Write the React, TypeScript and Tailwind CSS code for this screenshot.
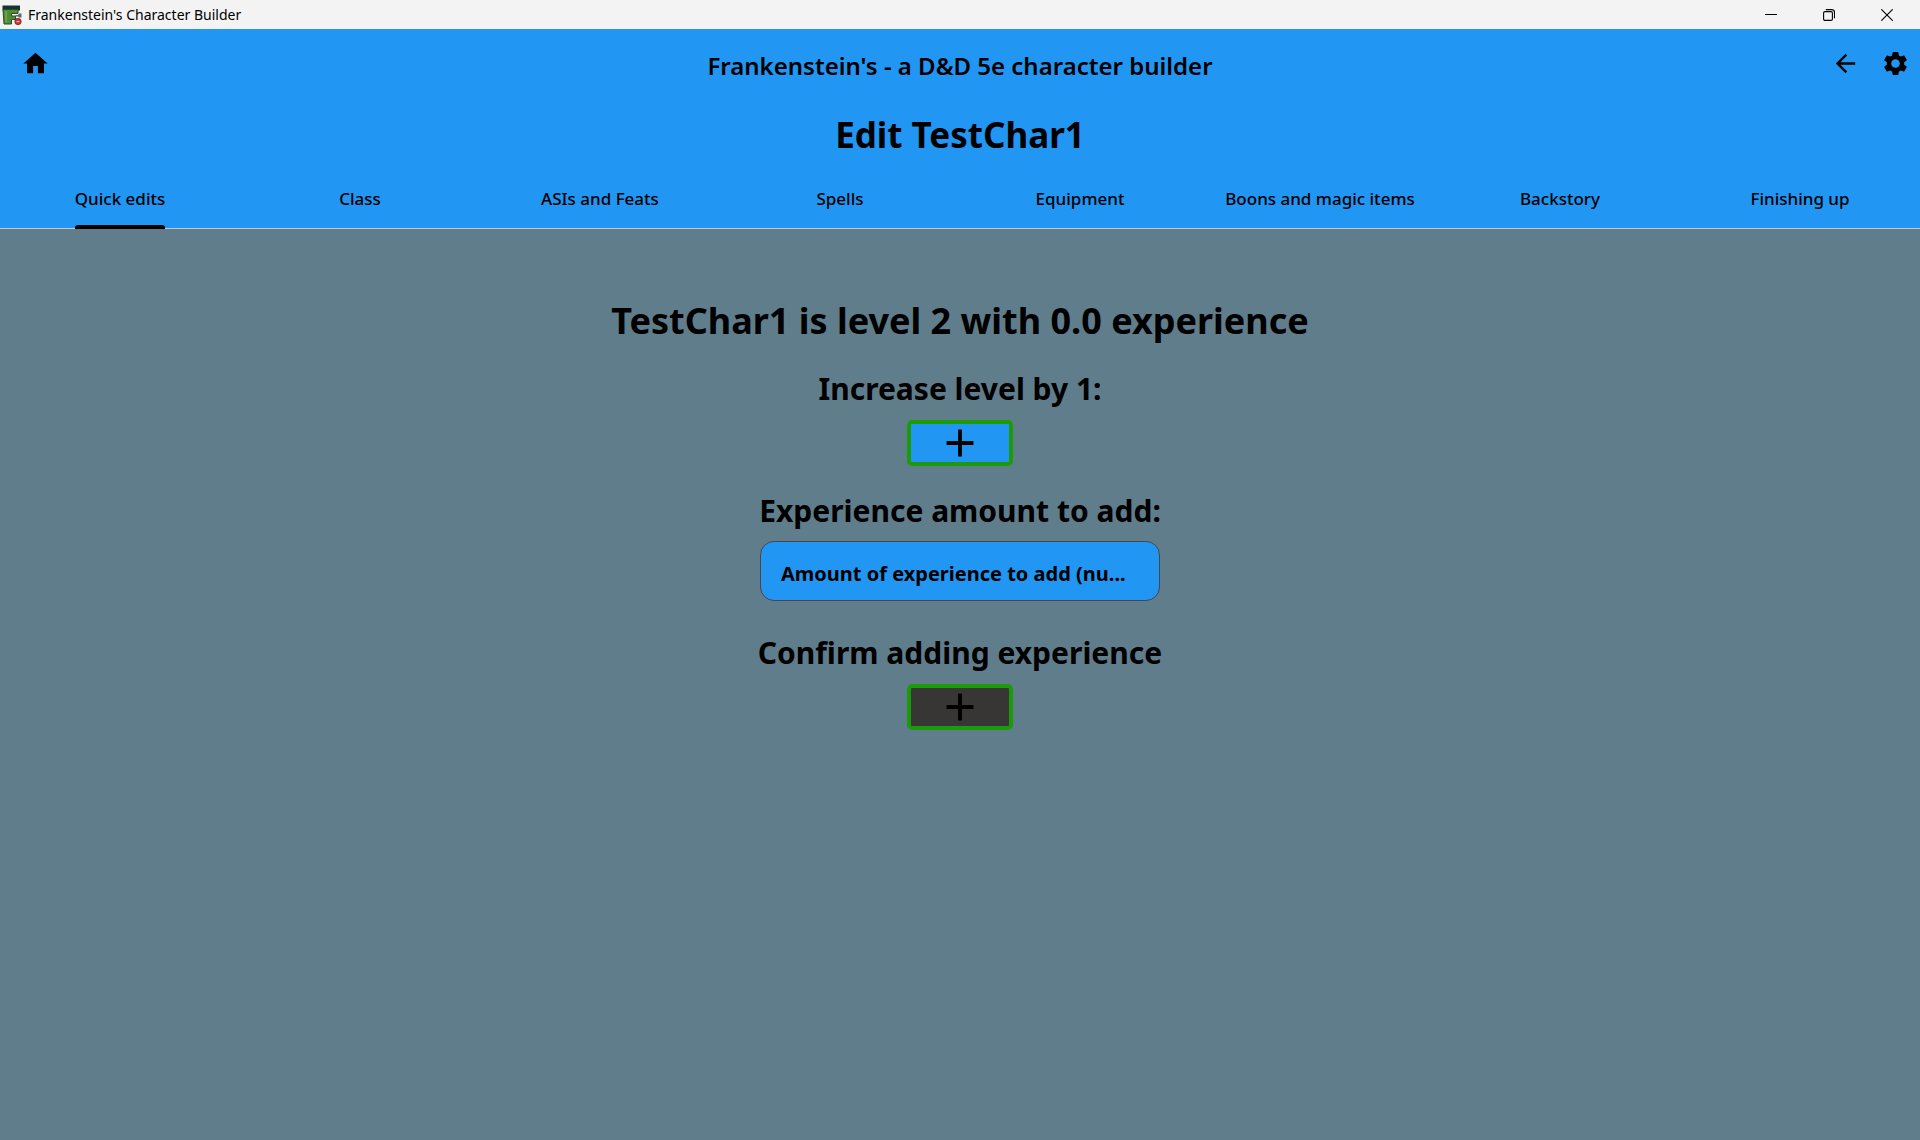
import { MdAdd, MdArrowBack, MdHome, MdSettings } from 'react-icons/md';

const tabs = [
  'Quick edits',
  'Class',
  'ASIs and Feats',
  'Spells',
  'Equipment',
  'Boons and magic items',
  'Backstory',
  'Finishing up',
];

function AppLogo() {
  return (
    <svg viewBox="0 0 20 20" className="size-5" aria-hidden="true">
      <path d="M0.500 0.500h17.500v5H0.500z" fill="#12362f" />
      <path d="M1 4.500h15v4H9.500v2.500h4v3.500h-4v4.500H2z" fill="#4f8a35" stroke="#2c4a26" strokeWidth="1" />
      <path d="M3.200 6h2v11.500h-2z" fill="#6aa545" />
      <path d="M13.500 10h2.500l1-1.500h2.500v4H17l-1-1h-2.500z" fill="#5d6a76" />
      <circle cx="16" cy="16.500" r="3.200" fill="#c9342f" stroke="#7c2a2a" strokeWidth="0.800" />
      <path d="M14.500 16h3v1.200h-3z" fill="#e9b4a6" />
    </svg>
  );
}

function TitleBar() {
  const button = 'flex h-full w-[58px] items-center justify-center';
  return (
    <div className="flex h-[29px] items-center bg-[#f3f3f3] pr-1 pl-0.5">
      <AppLogo />
      <span className="ml-1.5 flex-1 text-[14px] leading-5">Frankenstein's Character Builder</span>
      <button type="button" aria-label="Minimize" className={button}>
        <svg viewBox="0 0 12 12" className="size-3" shapeRendering="crispEdges">
          <path d="M0 5h12v1H0z" />
        </svg>
      </button>
      <button type="button" aria-label="Restore" className={button}>
        <svg viewBox="0 0 12 12" className="size-3" fill="none" stroke="#000" strokeWidth="1.100">
          <rect x="0.600" y="2.600" width="8.800" height="8.800" rx="1.400" />
          <path d="M2.800 0.600H8.500a3 3 0 0 1 3 3V9.200" />
        </svg>
      </button>
      <button type="button" aria-label="Close" className={button}>
        <svg viewBox="0 0 12 12" className="size-3" stroke="#000" strokeWidth="1.100">
          <path d="M0.300 0.300l11.400 11.400M11.700 0.300L0.300 11.700" />
        </svg>
      </button>
    </div>
  );
}

function AddButton({ label, disabled = false }: { label: string; disabled?: boolean }) {
  return (
    <button
      type="button"
      aria-label={label}
      disabled={disabled}
      className="mt-[9px] flex h-[46px] w-[106px] items-center justify-center rounded-[5px] border-4 border-[#1b9b0a] bg-[#2196f3] disabled:bg-[#383634]"
    >
      <MdAdd className="size-[46px] shrink-0" />
    </button>
  );
}

export default function App() {
  return (
    <div className="flex min-h-screen flex-col bg-[#607d8b] font-['Noto_Sans',sans-serif] text-black">
      <TitleBar />
      <header className="bg-[#2196f3]">
        <div className="grid h-[68px] grid-cols-[1fr_auto_1fr] items-center px-2.5">
          <button type="button" aria-label="Home" className="flex size-[50px] items-center justify-center">
            <MdHome className="size-[29px]" />
          </button>
          <h1 className="pt-1.5 text-[24px] leading-8 font-[650]">
            Frankenstein's - a D&amp;D 5e character builder
          </h1>
          <div className="flex justify-end">
            <button type="button" aria-label="Back" className="flex size-[50px] items-center justify-center">
              <MdArrowBack className="size-[29px]" />
            </button>
            <button type="button" aria-label="Settings" className="-mr-2.5 flex size-[50px] items-center justify-center">
              <MdSettings className="size-[29px]" />
            </button>
          </div>
        </div>
        <h2 className="pt-0.5 text-center text-[35px] leading-[72px] font-bold">Edit TestChar1</h2>
        <nav className="grid grid-cols-8 border-b border-[#cac4d0] text-[17px] font-medium">
          {tabs.map((tab, i) => (
            <a key={tab} href="#" className="flex h-[57px] justify-center whitespace-nowrap">
              <span className="relative leading-[56px]">
                {tab}
                {i === 0 && <span className="absolute inset-x-0 -bottom-px h-1 rounded-t-[3px] bg-black" />}
              </span>
            </a>
          ))}
        </nav>
      </header>
      <main className="flex flex-1 flex-col items-center pt-[66px] font-bold">
        <h2 className="text-[36px] leading-[52px]">TestChar1 is level 2 with 0.0 experience</h2>
        <h3 className="mt-5 text-[30px] leading-[44px]">Increase level by 1:</h3>
        <AddButton label="Increase level by 1" />
        <label htmlFor="experience" className="mt-[23px] text-[30px] leading-[44px]">
          Experience amount to add:
        </label>
        <input
          id="experience"
          type="text"
          inputMode="decimal"
          placeholder="Amount of experience to add (nu..."
          className="mt-2 h-[60px] w-[400px] rounded-[14px] border border-[#49454f] bg-[#2196f3] px-5 pt-1 text-[20px] outline-none placeholder:text-black placeholder:opacity-100"
        />
        <h3 className="mt-[30px] text-[30px] leading-[44px]">Confirm adding experience</h3>
        <AddButton label="Confirm adding experience" disabled />
      </main>
    </div>
  );
}
